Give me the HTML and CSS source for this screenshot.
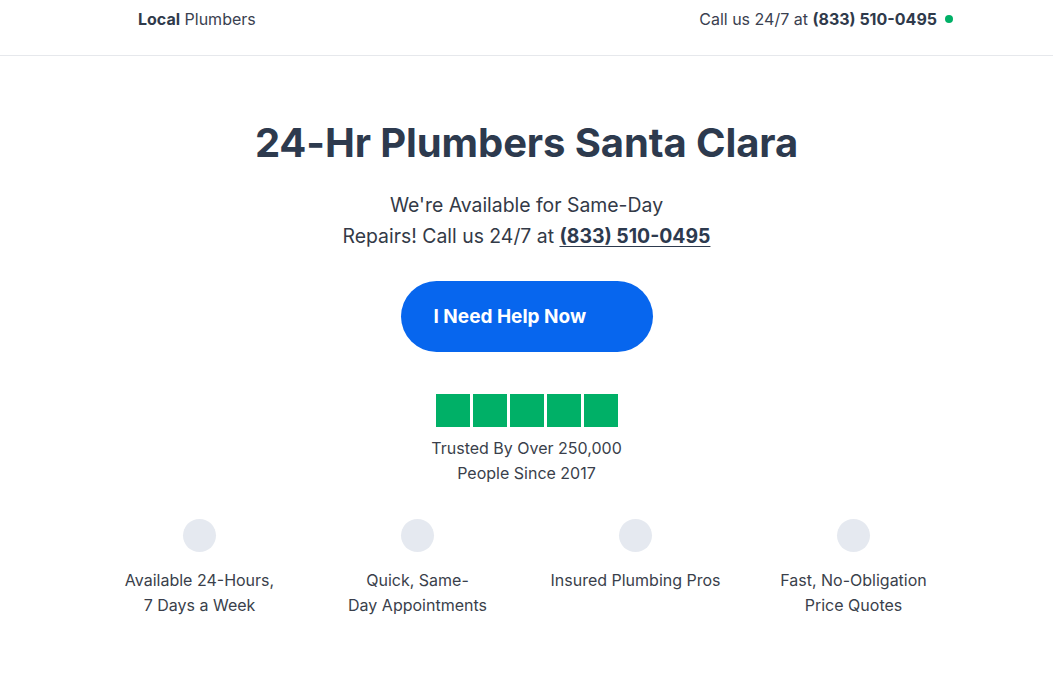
FILE: index.html
```html
<!DOCTYPE html>
<html lang="en">
<head>
<meta charset="utf-8">
<title>24-Hr Plumbers Santa Clara</title>
<link rel="stylesheet" href="styles.css">
</head>
<body>
<header class="topbar">
  <div class="topbar-inner">
    <div class="brand"><strong>Local</strong> Plumbers</div>
    <div class="callout">Call us 24/7 at <strong>(833) 510-0495</strong><span class="dot"></span></div>
  </div>
</header>
<main class="hero">
  <h1 class="title">24-Hr Plumbers Santa Clara</h1>
  <p class="subtitle">We're Available for Same-Day<br>Repairs! Call us 24/7 at <a class="phone" href="#">(833) 510-0495</a></p>
  <a class="cta" href="#">I Need Help Now</a>
  <div class="stars">
    <span class="star"></span><span class="star"></span><span class="star"></span><span class="star"></span><span class="star"></span>
  </div>
  <p class="trusted">Trusted By Over 250,000<br>People Since 2017</p>
  <ul class="features">
    <li class="feature"><span class="circle"></span><span class="label">Available 24-Hours,<br>7 Days a Week</span></li>
    <li class="feature"><span class="circle"></span><span class="label">Quick, Same-<br>Day Appointments</span></li>
    <li class="feature"><span class="circle"></span><span class="label">Insured Plumbing Pros</span></li>
    <li class="feature"><span class="circle"></span><span class="label">Fast, No-Obligation<br>Price Quotes</span></li>
  </ul>
</main>
</body>
</html>
```
FILE: styles.css
```css
* { box-sizing: border-box; }
body {
  margin: 0;
  background: #fff;
  font-family: Inter, "Noto Sans", sans-serif;
  color: #2f3a4b;
}
.topbar {
  height: 56px;
  border-bottom: 1px solid #e6e8ec;
}
.topbar-inner {
  height: 100%;
  display: flex;
  justify-content: space-between;
  align-items: center;
  padding: 0 100px 17px 138px;
  font-size: 16px;
  color: #3a4150;
}
.brand strong, .callout strong { font-weight: 700; color: #2f3a4b; }
.callout { display: flex; align-items: center; white-space: pre; }
.dot {
  width: 8px; height: 8px; border-radius: 50%;
  background: #00b067; margin-left: 8px; display: inline-block;
}
.hero {
  display: flex;
  flex-direction: column;
  align-items: center;
  padding-top: 61px;
}
.title {
  margin: 0;
  font-size: 40px;
  font-weight: 700;
  line-height: 52px;
  color: #2d3a4e;
  letter-spacing: -0.1px;
}
.subtitle {
  margin: 21px 0 0;
  text-align: center;
  font-size: 19.4px;
  line-height: 31px;
  color: #333a47;
}
.phone { color: #2d3a4e; font-weight: 700; text-decoration: underline; text-underline-offset: 3px; }
.cta {
  margin-top: 29px;
  width: 252px;
  height: 71px;
  border-radius: 36px;
  background: #0766ee;
  color: #fff;
  font-weight: 700;
  font-size: 19px;
  text-decoration: none;
  display: flex;
  align-items: center;
  padding-left: 33px;
}
.stars {
  margin-top: 42px;
  display: flex;
  gap: 3px;
}
.star { width: 34px; height: 33px; background: #00b067; }
.trusted {
  margin: 9px 0 0;
  text-align: center;
  font-size: 16px;
  line-height: 25px;
  color: #3a3f4b;
}
.features {
  list-style: none;
  margin: 33px 0 0;
  padding: 0;
  display: grid;
  grid-template-columns: repeat(4, 218px);
}
.feature {
  display: flex;
  flex-direction: column;
  align-items: center;
  text-align: center;
}
.circle { width: 33px; height: 33px; border-radius: 50%; background: #e5e9f0; }
.label {
  margin-top: 16px;
  font-size: 16px;
  line-height: 25px;
  color: #3a3f4b;
}
```
